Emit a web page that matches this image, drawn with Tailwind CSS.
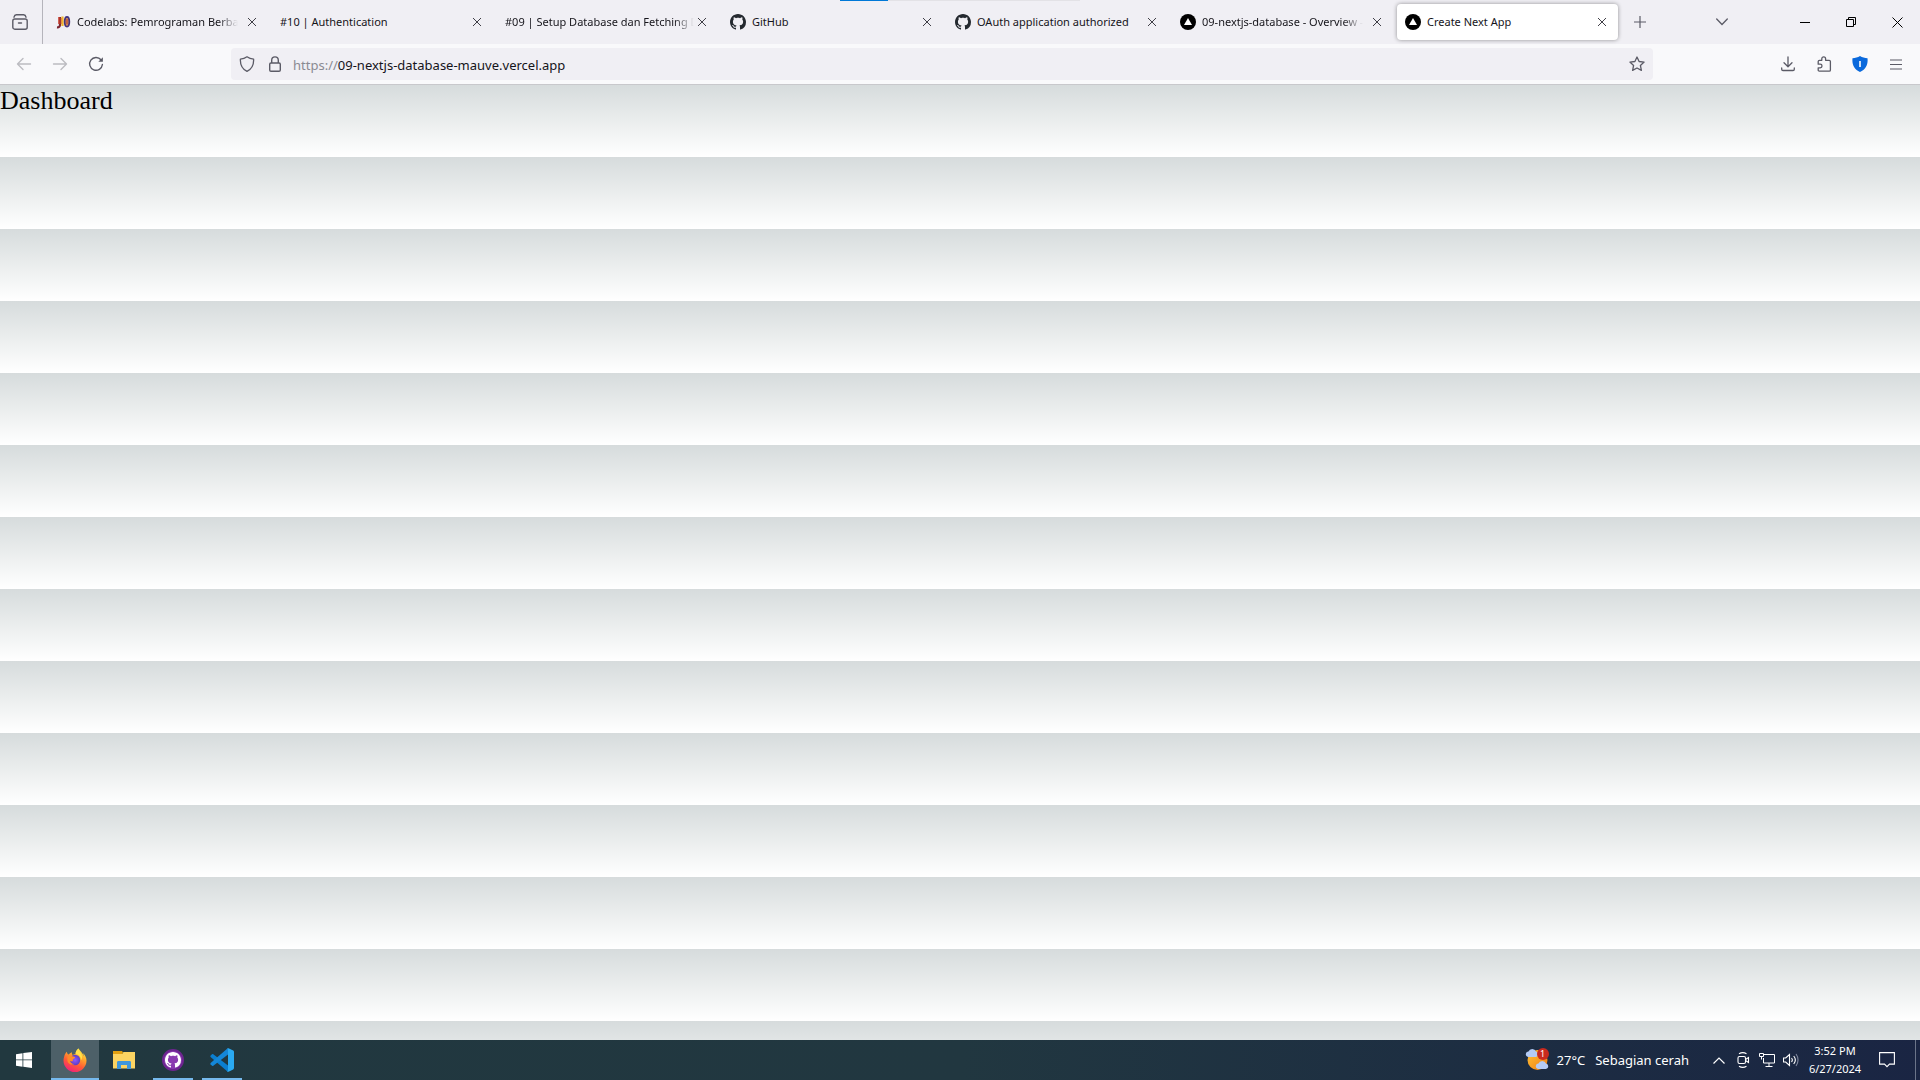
<!DOCTYPE html>
<html lang="id">
<head>
<meta charset="utf-8">
<meta name="viewport" content="width=device-width, initial-scale=1">
<title>Create Next App</title>
<script src="https://cdn.jsdelivr.net/npm/@tailwindcss/browser@4"></script>
</head>
<body class="flex h-screen flex-col overflow-hidden bg-white font-['Noto_Sans',sans-serif] text-[#15141a]">

<!-- Shared symbols -->
<svg class="hidden" aria-hidden="true">
  <symbol id="close" viewBox="0 0 10 10"><path d="M1 1l8 8M9 1L1 9" stroke="#2b2a33" stroke-width=".9" fill="none"/></symbol>
  <symbol id="github" viewBox="0 0 16 16"><path fill="currentColor" d="M8 0C3.58 0 0 3.58 0 8c0 3.54 2.29 6.53 5.47 7.59.4.07.55-.17.55-.38 0-.19-.01-.82-.01-1.49-2.01.37-2.53-.49-2.69-.94-.09-.23-.48-.94-.82-1.13-.28-.15-.68-.52-.01-.53.63-.01 1.08.58 1.23.82.72 1.21 1.87.87 2.33.66.07-.52.28-.87.51-1.07-1.78-.2-3.64-.89-3.64-3.95 0-.87.31-1.59.82-2.15-.08-.2-.36-1.02.08-2.12 0 0 .67-.21 2.2.82.64-.18 1.32-.27 2-.27s1.36.09 2 .27c1.53-1.04 2.2-.82 2.2-.82.44 1.1.16 1.92.08 2.12.51.56.82 1.27.82 2.15 0 3.07-1.87 3.75-3.65 3.95.29.25.54.73.54 1.48 0 1.07-.01 1.93-.01 2.2 0 .21.15.46.55.38A8.01 8.01 0 0 0 16 8c0-4.42-3.58-8-8-8z"/></symbol>
  <symbol id="vercel" viewBox="0 0 16 16"><circle cx="8" cy="8" r="8"/><path d="M8 4l4 7H4z" fill="#fff"/></symbol>
</svg>

<!-- Tab strip -->
<header class="relative flex h-11 shrink-0 bg-[#f0eff4]">
  <div class="absolute top-0 left-1/2 flex h-px w-60 -translate-x-1/2 bg-[#e3e2e6]"><span class="w-12 bg-[#0078d7]"></span></div>
  <button aria-label="Firefox View" class="flex w-[43px] shrink-0 items-center justify-center border-r border-[#b5b4bb] pr-0.5 text-[#5b5b66]">
    <svg class="size-4" viewBox="0 0 16 16" fill="none" stroke="currentColor" stroke-width="1.4" stroke-linecap="round"><rect x=".8" y="5" width="14.4" height="10.2" rx="2"/><path d="M2 3.2c.3-1.4 1-2.3 2.400-2.400h7.200c1.400.1 2.100 1 2.400 2.400M6.500 9h3"/></svg>
  </button>
  <nav class="flex min-w-0 items-center gap-1 px-1 text-[11px] leading-4" aria-label="Tabs">
    <div class="flex h-9 w-[221px] min-w-0 items-center gap-[6px] px-2">
      <svg class="size-4 shrink-0" viewBox="0 0 16 16"><path d="M5 3v7.500c0 2-1 3-3 2.800" stroke="#7a2430" stroke-width="2.200" fill="none"/><path d="M4 3v7" stroke="#c73b2a" stroke-width="1.500"/><path d="M7.500 2.500v9.500" stroke="#f0b429" stroke-width="2.200"/><path d="M6.200 4v6" stroke="#e8792b" stroke-width="1"/><ellipse cx="12" cy="7.800" rx="2.300" ry="4.800" fill="#e9a15a" stroke="#46347c" stroke-width="1.800"/><path d="M12 5v5.500" stroke="#b3382e" stroke-width="1.200"/></svg>
      <a href="#" class="min-w-0 flex-1 overflow-hidden whitespace-nowrap [mask-image:linear-gradient(to_left,transparent,black_20px)]">Codelabs: Pemrograman Berbasis</a>
      <button aria-label="Close tab" class="flex w-4 shrink-0 justify-center"><svg class="size-[10px]"><use href="#close"/></svg></button>
    </div>
    <div class="flex h-9 w-[221px] min-w-0 items-center px-2">
      <a href="#" class="min-w-0 flex-1 overflow-hidden whitespace-nowrap">#10 | Authentication</a>
      <button aria-label="Close tab" class="flex w-4 shrink-0 justify-center"><svg class="size-[10px]"><use href="#close"/></svg></button>
    </div>
    <div class="flex h-9 w-[221px] min-w-0 items-center px-2">
      <a href="#" class="min-w-0 flex-1 overflow-hidden whitespace-nowrap [mask-image:linear-gradient(to_left,transparent,black_20px)]">#09 | Setup Database dan Fetching Data</a>
      <button aria-label="Close tab" class="flex w-4 shrink-0 justify-center"><svg class="size-[10px]"><use href="#close"/></svg></button>
    </div>
    <div class="flex h-9 w-[221px] min-w-0 items-center gap-[6px] px-2">
      <svg class="size-4 shrink-0 text-[#24292f]"><use href="#github"/></svg>
      <a href="#" class="min-w-0 flex-1 overflow-hidden whitespace-nowrap">GitHub</a>
      <button aria-label="Close tab" class="flex w-4 shrink-0 justify-center"><svg class="size-[10px]"><use href="#close"/></svg></button>
    </div>
    <div class="flex h-9 w-[221px] min-w-0 items-center gap-[6px] px-2">
      <svg class="size-4 shrink-0 text-[#24292f]"><use href="#github"/></svg>
      <a href="#" class="min-w-0 flex-1 overflow-hidden whitespace-nowrap">OAuth application authorized</a>
      <button aria-label="Close tab" class="flex w-4 shrink-0 justify-center"><svg class="size-[10px]"><use href="#close"/></svg></button>
    </div>
    <div class="flex h-9 w-[221px] min-w-0 items-center gap-[6px] px-2">
      <svg class="size-4 shrink-0"><use href="#vercel"/></svg>
      <a href="#" class="min-w-0 flex-1 overflow-hidden whitespace-nowrap [mask-image:linear-gradient(to_left,transparent,black_20px)]">09-nextjs-database - Overview –</a>
      <button aria-label="Close tab" class="flex w-4 shrink-0 justify-center"><svg class="size-[10px]"><use href="#close"/></svg></button>
    </div>
    <div class="flex h-9 w-[221px] min-w-0 items-center gap-[6px] rounded bg-white px-2 shadow-[0_0_4px_rgba(0,0,0,0.4)]">
      <svg class="size-4 shrink-0"><use href="#vercel"/></svg>
      <a href="#" aria-current="page" class="min-w-0 flex-1 overflow-hidden whitespace-nowrap">Create Next App</a>
      <button aria-label="Close tab" class="flex w-4 shrink-0 justify-center"><svg class="size-[10px]"><use href="#close"/></svg></button>
    </div>
  </nav>
  <button aria-label="New tab" class="flex w-9 shrink-0 items-center justify-center text-[#5b5b66]"><svg class="size-3" viewBox="0 0 12 12" stroke="currentColor" stroke-width="1.200"><path d="M6 0v12M0 6h12"/></svg></button>
  <button aria-label="List all tabs" class="mr-11 ml-auto flex w-8 shrink-0 items-center justify-center text-[#5b5b66]"><svg class="h-2 w-3" viewBox="0 0 12 8" fill="none" stroke="currentColor" stroke-width="1.300" stroke-linecap="round"><path d="M.7 1L6 6.500 11.300 1"/></svg></button>
  <div class="flex shrink-0 text-black">
    <button aria-label="Minimize" class="flex w-[46px] items-center justify-center"><svg class="h-px w-[10px]" viewBox="0 0 10 1"><path fill="currentColor" d="M0 0h10v1H0z"/></svg></button>
    <button aria-label="Restore" class="flex w-[46px] items-center justify-center"><svg class="size-[10px]" viewBox="0 0 10 10" fill="none" stroke="currentColor"><path d="M.5 2.500h7v7h-7zM2.500 2V.5h7v7H8"/></svg></button>
    <button aria-label="Close window" class="flex w-[46px] items-center justify-center"><svg class="size-[11px]" viewBox="0 0 11 11" stroke="currentColor"><path d="M.5.5l10 10M10.500.5l-10 10"/></svg></button>
  </div>
</header>

<!-- Navigation toolbar -->
<div class="flex h-[41px] shrink-0 items-center border-b border-[#c8c8cc] bg-[#f9f9fb] px-[6px] text-[#5b5b66]">
  <button aria-label="Back" disabled class="flex w-9 shrink-0 justify-center text-[#bcbcc1]"><svg class="size-4" viewBox="0 0 16 16" fill="none" stroke="currentColor" stroke-width="1.400" stroke-linecap="round" stroke-linejoin="round"><path d="M14.500 8h-13M7 2.500L1.500 8 7 13.500"/></svg></button>
  <button aria-label="Forward" disabled class="flex w-9 shrink-0 justify-center text-[#bcbcc1]"><svg class="size-4" viewBox="0 0 16 16" fill="none" stroke="currentColor" stroke-width="1.400" stroke-linecap="round" stroke-linejoin="round"><path d="M1.500 8h13M9 2.500L14.500 8 9 13.500"/></svg></button>
  <button aria-label="Reload" class="flex w-9 shrink-0 justify-center"><svg class="size-4" viewBox="0 0 16 16" fill="none" stroke="currentColor" stroke-width="1.400" stroke-linecap="round"><path d="M13 3.800A6.400 6.400 0 1 0 14.400 8.500"/><path d="M14.900 1.200v4.600h-4.600z" fill="currentColor" stroke="none"/></svg></button>
  <div class="mx-[117px] flex h-8 min-w-0 flex-1 items-center rounded bg-[#f0eff4]">
    <button aria-label="Tracking protection" class="flex w-8 shrink-0 justify-center"><svg class="size-4" viewBox="0 0 16 16" fill="none" stroke="currentColor" stroke-width="1.300" stroke-linejoin="round"><path d="M8 .8c1.800 1.300 4 2.100 6.600 2.300.3 5.400-1.700 9.800-6.600 12.200C3.100 12.900 1.100 8.500 1.400 3.100 4 2.900 6.200 2.100 8 .8z"/></svg></button>
    <button aria-label="Connection secure" class="flex w-6 shrink-0 justify-center"><svg class="size-4" viewBox="0 0 16 16" fill="none" stroke="currentColor" stroke-width="1.400"><rect x="2.700" y="7" width="10.600" height="8.200" rx="1.300"/><path d="M4.700 7V4.200a3.300 3.300 0 0 1 6.600 0V7"/></svg></button>
    <div class="relative min-w-0 flex-1 text-[13px] leading-[22px]">
      <input aria-label="Address" value="https://09-nextjs-database-mauve.vercel.app" class="block w-full bg-transparent px-[6px] text-transparent outline-none">
      <div aria-hidden="true" class="pointer-events-none absolute inset-0 px-[6px] pt-px whitespace-nowrap text-[#15141a]"><span class="text-[#8a8a92]">https://</span>09-nextjs-database-mauve.vercel.app</div>
    </div>
    <button aria-label="Bookmark this page" class="flex w-8 shrink-0 justify-center"><svg class="size-4" viewBox="0 0 16 16" fill="none" stroke="currentColor" stroke-width="1.300" stroke-linejoin="round"><path d="M8 1l2.100 4.500 5 .6-3.700 3.400 1 4.900L8 12l-4.400 2.400 1-4.900L.9 6.100l5-.6z"/></svg></button>
  </div>
  <button aria-label="Downloads" class="flex w-9 shrink-0 justify-center"><svg class="size-4" viewBox="0 0 16 16" fill="none" stroke="currentColor" stroke-width="1.300" stroke-linecap="round" stroke-linejoin="round"><path d="M8 1v9.500M4 6.800l4 4 4-4M1.700 12v1.200c0 .8.500 1.300 1.300 1.300h10c.8 0 1.300-.5 1.300-1.300V12"/></svg></button>
  <button aria-label="Extensions" class="flex w-9 shrink-0 justify-center"><svg class="size-4" viewBox="0 0 16 16" fill="none" stroke="currentColor" stroke-width="1.300" stroke-linejoin="round"><path d="M2.200 5.500c0-.8.400-1.200 1.200-1.200h2.400V2.700a1.900 1.900 0 0 1 3.800 0v1.600h3.600c.8 0 1.200.4 1.200 1.200v8.500c0 .8-.4 1.200-1.200 1.200H3.400c-.8 0-1.200-.4-1.200-1.200v-2.200h2a1.700 1.700 0 0 0 0-3.600h-2z"/></svg></button>
  <button aria-label="Shield extension" class="flex w-9 shrink-0 justify-center"><svg class="size-4" viewBox="0 0 16 16"><path fill="#0a69dc" d="M8 0c2.200 1.500 4.800 2 7.500 2.200C16.200 8.500 13.800 13.600 8 16 2.200 13.600-.2 8.500.5 2.200 3.200 2 5.800 1.500 8 0z"/><path fill="#fff" d="M7.200 5h1.600v6H7.200z"/></svg></button>
  <button aria-label="Menu" class="flex w-9 shrink-0 justify-center"><svg class="h-[11px] w-3" viewBox="0 0 12 11" stroke="currentColor" stroke-width="1.200"><path d="M0 1h12M0 5.500h12M0 10h12"/></svg></button>
</div>

<!-- Page viewport -->
<main class="min-h-0 flex-1 bg-[linear-gradient(to_bottom,#d6dbdc,#ffffff)] bg-[length:100%_72px] bg-repeat-y">
  <h1 class="font-['Liberation_Serif',serif] text-[26px] leading-8 text-black">Dashboard</h1>
</main>

<!-- Taskbar -->
<footer class="flex h-10 shrink-0 items-stretch bg-linear-to-r from-[#21383f] via-[#213740] to-[#1a2543] text-white">
  <button aria-label="Start" class="mr-[3px] flex w-12 shrink-0 items-center justify-center"><svg class="size-4" viewBox="0 0 16 16" fill="#fff"><path d="M0 2.200L6.500 1.200v6.300H0zM7.300 1.100L16 0v7.500H7.300zM0 8.300h6.500v6.400L0 13.800zM7.300 8.300H16V16l-8.700-1.200z"/></svg></button>
  <div class="flex gap-px">
    <button aria-label="Firefox" class="relative flex w-12 items-center justify-center bg-[#4d6068]">
      <svg class="size-6" viewBox="0 0 24 24">
        <defs>
          <linearGradient id="fx1" x1=".8" y1="0" x2=".3" y2="1"><stop offset="0" stop-color="#fff44f"/><stop offset=".35" stop-color="#ffa52b"/><stop offset=".65" stop-color="#ff5a36"/><stop offset="1" stop-color="#f0207c"/></linearGradient>
          <radialGradient id="fx2"><stop offset="0" stop-color="#9059ff"/><stop offset="1" stop-color="#5b3cc4"/></radialGradient>
        </defs>
        <path fill="url(#fx1)" d="M22.500 8.500c-.6-1.300-1.700-2.700-2.600-3.200.7 1.400 1 2.300 1.200 3.100C19.700 5 17.400 3.600 15.500.5 13.500 1.800 12.500 4 12.600 6c-1 .1-2 .4-2.800 1C8.900 6.300 8.800 5.200 9 4.200 7.600 4.700 6.300 5.700 5.500 6.600 4.700 6.400 4 5 3.900 3.800 2.800 4.700 1.600 6.600 1.200 8.600.7 10 .5 11.400.5 12.500a11.500 11.500 0 0 0 23 0c0-1.400-.3-2.800-1-4z"/>
        <circle cx="12" cy="12" r="5.200" fill="url(#fx2)"/>
        <path fill="#ff8a2b" d="M4.500 8.500c2-1.300 4.300-1 5.400.1 1 .1 2 .3 2.200.6-.1 1.100-1.600 1.500-2.200 2.200-.3.900.3 1.300-.4 1.900-1 .5-1.800-.3-2.500.3.500 1.300 2.500 2.700 4.600 2.300-3 1.800-6.500-.2-7.200-3z"/>
        <path fill="#ffe14a" d="M15.500.5c-2 1.300-3 3.500-2.900 5.500 3.600.4 5.700 3.200 5.200 6.500 1.500-1.500 1.600-4 .7-5.700-.8-2.200-2.300-3.700-3-6.300z"/>
      </svg>
      <span class="absolute inset-x-0 bottom-0 h-0.5 bg-[#76b9ed]"></span>
    </button>
    <button aria-label="File Explorer" class="flex w-12 items-center justify-center">
      <svg class="h-[18px] w-[22px]" viewBox="0 0 22 18"><path fill="#fcd462" d="M0 3h9l1.500-2H22v16.500H0z"/><path fill="#e2a011" d="M0 0h9l1 1.500L9 3H0z"/><path fill="#3f97dc" d="M4 18v-6.500c0-1 .5-1.500 1.500-1.500h11c1 0 1.500.5 1.500 1.500V18h-4v-4H8v4z"/></svg>
    </button>
    <button aria-label="GitHub Desktop" class="relative flex w-12 items-center justify-center">
      <span class="flex size-[22px] items-center justify-center rounded-full border-2 border-[#6d2590] bg-[#8a3bb0] text-white"><svg class="size-4"><use href="#github"/></svg></span>
      <span class="absolute inset-x-1 bottom-0 h-0.5 bg-[#76b9ed]"></span>
    </button>
    <button aria-label="Visual Studio Code" class="relative flex w-12 items-center justify-center">
      <svg class="size-6" viewBox="0 0 24 24"><path fill="#0b7fd0" d="M.6 7.600l1.500-1.300c.4-.3.800-.3 1.200 0L18 17.500V24L.6 9c-.4-.4-.4-1 0-1.400z"/><path fill="#1487d8" d="M.6 16.400l1.500 1.300c.4.3.8.3 1.200 0L18 6.500V0L.6 15c-.4.400-.4 1 0 1.400z"/><path fill="#2aaaf2" d="M17.800 23.800c-.4-.1-.7-.3-1-.6.6.5 1.200.2 1.200-.9V1.700c0-1.100-.6-1.400-1.200-.9.400-.5 1-.8 1.700-.5l4.700 2.300c.5.300.8.700.8 1.300v16.200c0 .6-.3 1-.8 1.300l-4.700 2.300z"/></svg>
      <span class="absolute inset-x-1 bottom-0 h-0.5 bg-[#76b9ed]"></span>
    </button>
  </div>
  <div class="ml-auto flex shrink-0 items-center">
    <button class="mr-[18px] flex items-center text-[13px] leading-5 whitespace-nowrap">
      <span class="relative mr-2 block h-6 w-6">
        <svg class="size-6" viewBox="0 0 24 24"><defs><linearGradient id="sun" x1="0" y1="0" x2="1" y2="1"><stop offset="0" stop-color="#ffc235"/><stop offset="1" stop-color="#ef7d14"/></linearGradient></defs><circle cx="12.500" cy="12" r="10" fill="url(#sun)"/><path fill="#b4cbf5" d="M3 9a2.800 2.800 0 0 1 0-5.500h.5a4 4 0 0 1 7.500 0A2.800 2.800 0 0 1 11 9z"/><path fill="#b4cbf5" d="M13 21a2.800 2.800 0 0 1 0-5.500h.5a4 4 0 0 1 7.500 0 2.800 2.800 0 0 1 0 5.500z"/></svg>
        <span class="absolute top-0 right-0 flex size-3 items-center justify-center rounded-full bg-[#c92a1e] text-[9px] leading-3">1</span>
      </span>
      <span class="mr-[10px]">27°C</span><span>Sebagian cerah</span>
    </button>
    <button aria-label="Show hidden icons" class="flex w-6 justify-center"><svg class="h-[7px] w-3" viewBox="0 0 12 7" fill="none" stroke="#fff" stroke-width="1.200"><path d="M.5 6.500L6 1l5.500 5.500"/></svg></button>
    <button aria-label="Meet Now" class="flex w-6 justify-center"><svg class="size-4" viewBox="0 0 16 16" fill="none" stroke="#fff" stroke-width="1.100"><rect x="3" y="4.500" width="7.500" height="7" rx="1.500"/><path d="M10.500 7.500l3-2v5l-3-2M4 1.800c2-1.200 5.500-1.200 7.500 0M4 14.200c2 1.200 5.500 1.200 7.500 0"/></svg></button>
    <button aria-label="Network" class="flex w-6 justify-center"><svg class="size-4" viewBox="0 0 16 16" fill="none" stroke="#fff"><path d="M5 2.500h10.500v8.500H4.500V6M10 11v3M6.500 14.500h7M.5 1.500h4v3h-4zM2.500 4.500v3"/></svg></button>
    <button aria-label="Volume" class="flex w-6 justify-center"><svg class="size-4" viewBox="0 0 16 16" fill="none" stroke="#fff" stroke-width="1.100"><path d="M.5 6h2.200L6.500 2.500v11L2.700 10H.5zM8.500 6c1 1.200 1 2.800 0 4M10.700 4c1.900 2.300 1.900 5.700 0 8"/><path stroke="#8089a0" d="M13 2c2.700 3.500 2.700 8.500 0 12"/></svg></button>
    <button class="w-[60px] pl-1 text-center text-[11px] leading-[18px] whitespace-nowrap"><time datetime="2024-06-27T15:52"><span class="block">3:52 PM</span><span class="block">6/27/2024</span></time></button>
    <button aria-label="Notifications" class="mr-1 flex w-12 justify-center"><svg class="size-4" viewBox="0 0 16 16" fill="none" stroke="#fff" stroke-width="1.100"><path d="M.6.600h14.800v11.500H10.500L8 14.600l-2.500-2.500H.6z"/></svg></button>
    <button aria-label="Show desktop" class="h-10 w-[5px] border-l border-[#6b7489]"></button>
  </div>
</footer>
</body>
</html>
